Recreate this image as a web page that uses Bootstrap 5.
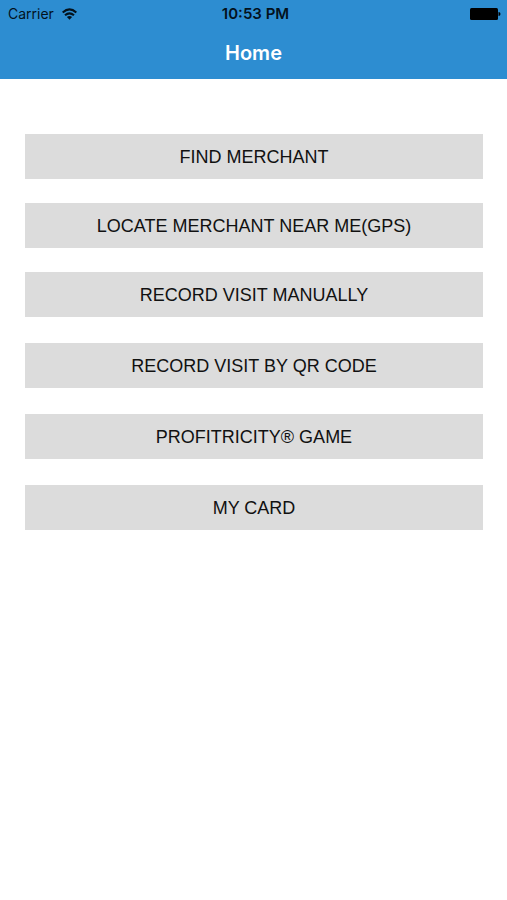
<!DOCTYPE html>
<html lang="en">
<head>
<meta charset="utf-8">
<meta name="viewport" content="width=device-width, initial-scale=1">
<title>Home</title>
<link href="https://cdn.jsdelivr.net/npm/bootstrap@5.3.0/dist/css/bootstrap.min.css" rel="stylesheet">
<style>
body { font-family: "Liberation Sans", Arial, sans-serif; background: #fff; color: #000; }
.app-header { background: #2d8dd1; padding-bottom: 1px; }
.status-bar { padding: 0 6px 0 8px; font-family: Inter, "Liberation Sans", sans-serif; font-size: 14px; line-height: 28px; color: #03121d; }
.status-time { font-size: 15px; padding-left: 2px; }
.page-title { font-family: Inter, "Liberation Sans", sans-serif; font-size: 20px; line-height: 50px; }
.menu-list { padding: 55px 24px 24px 25px; gap: 26px; }
.menu-group { gap: 24px; }
.menu-group-wide { gap: 26px; }
.menu-btn { --bs-btn-bg: #dcdcdc; --bs-btn-color: #111; --bs-btn-hover-bg: #d0d0d0; --bs-btn-active-bg: #c6c6c6; padding: 2px 0 0; font-size: 18px; line-height: 43px; }
</style>
<script defer src="https://cdn.jsdelivr.net/npm/bootstrap@5.3.0/dist/js/bootstrap.bundle.min.js"></script>
</head>
<body>
<header class="app-header">
  <div class="status-bar row g-0 align-items-center">
    <div class="col d-flex align-items-center gap-2">
      <span>Carrier</span>
      <svg width="15" height="13" viewBox="0 0 15 13" fill="none" stroke="#03121d" stroke-width="2.100" aria-hidden="true"><path d="M.7 4.500Q7.500-1.700 14.300 4.500M3 7.300Q7.500 3.300 12 7.300"/><path d="M4.900 9Q7.500 6.900 10.100 9L7.500 11.700Z" fill="#03121d" stroke="none"/></svg>
    </div>
    <div class="col-auto status-time fw-semibold">10:53 PM</div>
    <div class="col d-flex justify-content-end">
      <svg width="31" height="12" viewBox="0 0 31 12" aria-hidden="true"><rect width="28" height="12" rx="1.500"/><path d="M28.500 4q2 0 2 2t-2 2z"/></svg>
    </div>
  </div>
  <h1 class="page-title text-white text-center fw-semibold m-0">Home</h1>
</header>
<main class="menu-list d-grid">
  <div class="menu-group d-grid">
    <button type="button" class="btn menu-btn rounded-0 border-0">FIND MERCHANT</button>
    <button type="button" class="btn menu-btn rounded-0 border-0">LOCATE MERCHANT NEAR ME(GPS)</button>
    <button type="button" class="btn menu-btn rounded-0 border-0">RECORD VISIT MANUALLY</button>
  </div>
  <div class="menu-group-wide d-grid">
    <button type="button" class="btn menu-btn rounded-0 border-0">RECORD VISIT BY QR CODE</button>
    <button type="button" class="btn menu-btn rounded-0 border-0">PROFITRICITY® GAME</button>
    <button type="button" class="btn menu-btn rounded-0 border-0">MY CARD</button>
  </div>
</main>
</body>
</html>
